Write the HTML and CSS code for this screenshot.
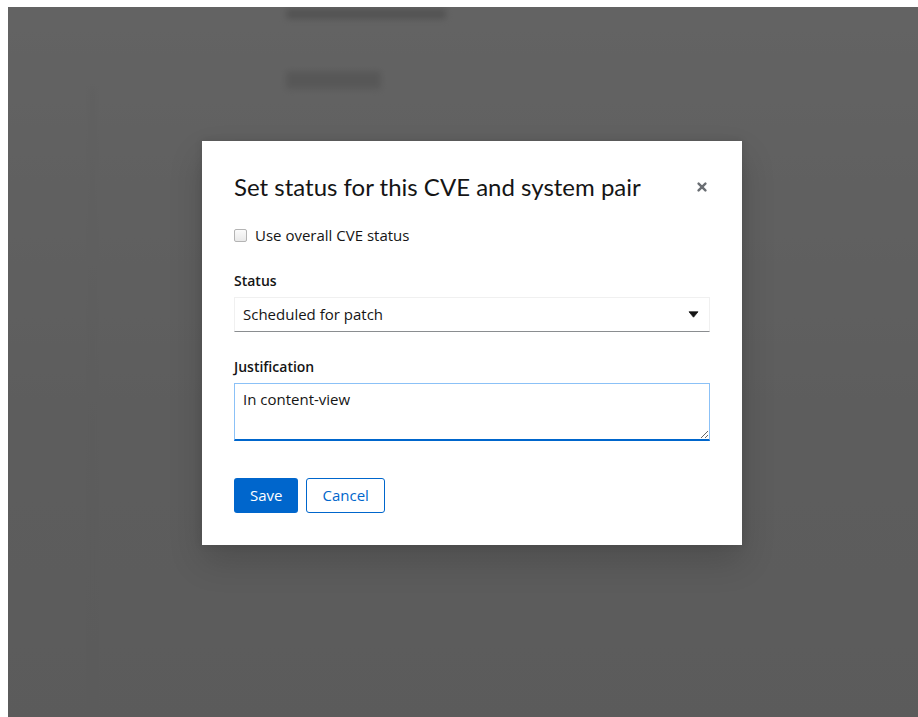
FILE: index.html
```html
<!DOCTYPE html>
<html lang="en">
<head>
<meta charset="utf-8">
<title>Vulnerability – Set status</title>
<link rel="stylesheet" href="styles.css">
</head>
<body>
<div class="frame">
  <div class="app">
    <!-- page content sitting under the modal backdrop -->
    <div class="app-content" aria-hidden="true">
      <div class="app-side"></div>
      <div class="app-main">
        <div class="ph-title"></div>
        <div class="ph-line"></div>
      </div>
    </div>

    <div class="backdrop">
      <div class="modal" role="dialog" aria-modal="true" aria-labelledby="modal-title">
        <header class="modal-header">
          <h1 class="modal-title" id="modal-title">Set status for this CVE and system pair</h1>
          <button class="close-btn" type="button" aria-label="Close">
            <svg class="close-icon" viewBox="0 0 10 10" aria-hidden="true">
              <path d="M1.6 1.6 L8.4 8.4 M8.4 1.6 L1.6 8.4"/>
            </svg>
          </button>
        </header>

        <form class="modal-body">
          <label class="check-row">
            <input class="check" type="checkbox">
            <span>Use overall CVE status</span>
          </label>

          <div class="field">
            <span class="field-label">Status</span>
            <div class="select" role="button" tabindex="0">
              <span class="select-text">Scheduled for patch</span>
              <svg class="caret" viewBox="0 0 11 7" aria-hidden="true">
                <path d="M1 0.8 H10 L5.5 6.2 Z"/>
              </svg>
            </div>
          </div>

          <div class="field">
            <label class="field-label" for="justification">Justification</label>
            <textarea class="textarea" id="justification">In content-view</textarea>
          </div>

          <div class="actions">
            <button class="btn btn-primary" type="button">Save</button>
            <button class="btn btn-secondary" type="button">Cancel</button>
          </div>
        </form>
      </div>
    </div>
  </div>
</div>
</body>
</html>
```

FILE: styles.css
```css
* {
  box-sizing: border-box;
}

html,
body {
  margin: 0;
  background: #fff;
}

body {
  font-family: "Open Sans", "Liberation Sans", sans-serif;
  color: #151515;
}

.frame {
  display: flex;
  width: 918px;
  height: 717px;
  padding: 7px 0 0 8px;
}

.app {
  position: relative;
  flex: 1;
  overflow: hidden;
  background: linear-gradient(#ffffff 0, #fafafa 120px, #efefef 420px, #ebebeb 100%);
}

/* faint page content behind the backdrop */
.app-content {
  display: flex;
  height: 100%;
  filter: blur(3px);
}

.app-side {
  width: 85px;
  margin-top: 80px;
  border-right: 1px solid #e2e2e2;
}

.app-main {
  padding-left: 193px;
}

.ph-title {
  width: 160px;
  height: 10px;
  margin-top: 2px;
  background: #d4d4d4;
  border-radius: 3px;
}

.ph-line {
  width: 95px;
  height: 18px;
  margin-top: 52px;
  background: #e0e0e0;
  border-radius: 3px;
}

/* modal backdrop */
.backdrop {
  position: absolute;
  inset: 0;
  display: flex;
  align-items: flex-start;
  padding: 134px 0 0 194px;
  background: rgba(3, 3, 3, 0.62);
}

.modal {
  width: 540px;
  padding: 30px 32px 32px;
  background: #fff;
  box-shadow: 0 16px 32px 0 rgba(3, 3, 3, 0.16), 0 0 8px 0 rgba(3, 3, 3, 0.1);
}

.modal-header {
  display: flex;
  align-items: center;
}

.modal-title {
  flex: 1;
  margin: 0;
  font-family: "Lato", "Liberation Sans", sans-serif;
  font-size: 24px;
  font-weight: 400;
  line-height: 1.3;
  color: #151515;
}

.close-btn {
  display: grid;
  place-items: center;
  width: 17px;
  height: 17px;
  margin-top: 1px;
  padding: 0;
  border: 0;
  background: none;
  cursor: pointer;
}

.close-icon {
  width: 10px;
  height: 10px;
  fill: none;
  stroke: #6a6e73;
  stroke-width: 2.4;
  stroke-linecap: round;
}

.modal-body {
  margin: 0;
}

.check-row {
  display: flex;
  align-items: center;
  gap: 8px;
  margin-top: 23px;
  font-size: 15px;
  line-height: 21px;
}

.check {
  appearance: none;
  width: 13px;
  height: 13px;
  margin: 0;
  border: 1px solid #b4b4b4;
  border-radius: 2px;
  background: linear-gradient(#fbfbfb, #e9e9e9);
}

.field {
  display: flex;
  flex-direction: column;
  gap: 6px;
  margin-top: 24px;
}

.field-label {
  font-size: 14px;
  font-weight: 600;
  line-height: 21px;
}

.select {
  display: flex;
  align-items: center;
  justify-content: space-between;
  height: 35px;
  padding: 0 10px 0 8px;
  border: 1px solid #f0f0f0;
  border-bottom-color: #8a8d90;
  font-size: 15px;
  line-height: 21px;
}

.caret {
  width: 11px;
  height: 7px;
  fill: #151515;
  stroke: #151515;
  stroke-width: 0.8;
  stroke-linejoin: round;
}

.textarea {
  display: block;
  width: 100%;
  height: 58px;
  margin: 0;
  padding: 5px 8px;
  border: 1px solid #8bc1f7;
  border-bottom: 2px solid #0066cc;
  border-radius: 0;
  outline: none;
  font-family: "Open Sans", "Liberation Sans", sans-serif;
  font-size: 15px;
  line-height: 21px;
  color: #151515;
}

.actions {
  display: flex;
  gap: 8px;
  margin-top: 37px;
}

.btn {
  height: 35px;
  padding: 0 16px;
  border-radius: 3px;
  font-family: "Open Sans", "Liberation Sans", sans-serif;
  font-size: 15px;
  line-height: 23px;
  cursor: pointer;
}

.btn-primary {
  border: 0;
  background: #0066cc;
  color: #fff;
}

.btn-secondary {
  padding: 0 15px;
  border: 1px solid #0066cc;
  background: #fff;
  color: #0066cc;
}
```
